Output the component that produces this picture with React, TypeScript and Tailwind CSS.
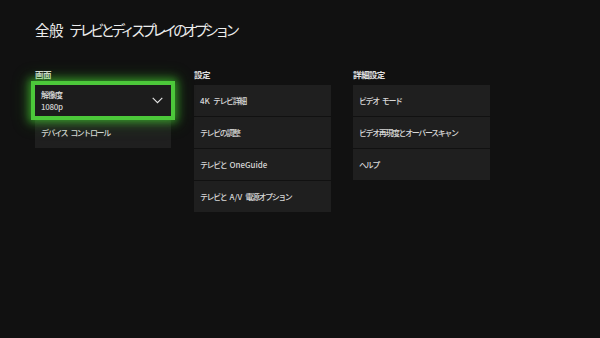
import React from 'react';

const jp = "font-['Noto_Sans_CJK_JP','Noto_Sans',sans-serif]";

// latin runs keep normal spacing, CJK runs are tightened
const L: React.FC<{ children: React.ReactNode }> = ({ children }) => (
    <span className="tracking-normal">{children}</span>
);

const Sp = () => <span className="inline-block w-[3px]" />;

const Tile: React.FC<{ children: React.ReactNode }> = ({ children }) => (
    <div className="h-[31px] bg-[#1f1f1f] flex items-center pl-[6px] text-[8px] tracking-[-1.4px] text-[#d8d8d8] font-medium leading-none whitespace-nowrap">
        <span>{children}</span>
    </div>
);

const Column: React.FC<{ title: string; children: React.ReactNode }> = ({ title, children }) => (
    <div className="w-[137px] flex flex-col">
        <div className="h-[12px] leading-[12px] text-[8.5px] tracking-[-0.6px] font-bold text-[#e0e0e0]">{title}</div>
        <div className="mt-[5px] flex flex-col gap-px">{children}</div>
    </div>
);

export default function App() {
    return (
        <div className={`w-[600px] h-[338px] bg-[#111111] overflow-hidden ${jp}`}>
            <div className="pl-[35px] pt-[20px]">
                <h1 className="text-[14.5px] leading-[20px] text-[#ededed] font-normal whitespace-nowrap">
                    <span className="tracking-[-0.5px]">全般</span>
                    <span className="ml-[6px] tracking-[-4px]">テレビとディスプレイのオプション</span>
                </h1>

                <div className="mt-[28px] flex gap-[22px]">
                    {/* 画面 */}
                    <Column title="画面">
                        <div className="relative z-10 h-[31px] w-[136px] bg-[#1c1c1c] flex items-center justify-between pl-[6px] pr-[7px] shadow-[0_0_0_4px_#4cc83a,0_0_8px_6px_rgba(70,210,50,0.6),0_0_16px_8px_rgba(60,190,40,0.25)]">
                            <div className="flex flex-col gap-[1px] text-[8px] leading-[11px] text-[#e0e0e0] font-medium">
                                <span className="tracking-[-1px]">解像度</span>
                                <span className="text-[#cfcfcf] tracking-[-0.3px]">1080p</span>
                            </div>
                            <svg width="11" height="7" viewBox="0 0 11 7" fill="none" className="mr-[1px]">
                                <path d="M0.7 0.8 L5.5 5.6 L10.3 0.8" stroke="#e6e6e6" strokeWidth="1.1" />
                            </svg>
                        </div>
                        <div className="w-[136px]">
                            <Tile>デバイス<Sp />コントロール</Tile>
                        </div>
                    </Column>

                    {/* 設定 */}
                    <Column title="設定">
                        <Tile><L>4K</L><Sp />テレビ詳細</Tile>
                        <Tile>テレビの調整</Tile>
                        <Tile>テレビと<Sp /><L>OneGuide</L></Tile>
                        <Tile>テレビと<Sp /><L>A/V</L><Sp />電源オプション</Tile>
                    </Column>

                    {/* 詳細設定 */}
                    <Column title="詳細設定">
                        <Tile>ビデオ<Sp />モード</Tile>
                        <Tile>ビデオ再現度とオーバースキャン</Tile>
                        <Tile>ヘルプ</Tile>
                    </Column>
                </div>
            </div>
        </div>
    );
}
